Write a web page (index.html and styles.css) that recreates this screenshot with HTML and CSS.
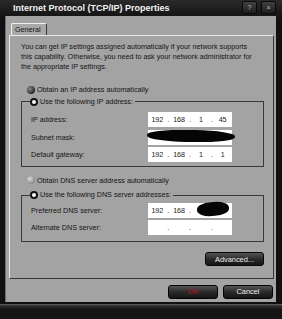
FILE: index.html
```html
<!DOCTYPE html>
<html lang="en">
<head>
    <meta charset="UTF-8">
    <title>Internet Protocol (TCP/IP) Properties</title>
    <link rel="stylesheet" href="styles.css">
</head>
<body>
    <div class="window">
        <div class="titlebar">
            <span class="title">Internet Protocol (TCP/IP) Properties</span>
            <div class="caption-buttons">
                <span class="cap-btn">?</span>
                <span class="cap-btn">&times;</span>
            </div>
        </div>
        <div class="client">
            <div class="tabs"><span class="tab">General</span></div>
            <div class="panel">
                <p class="intro">You can get IP settings assigned automatically if your network supports this capability. Otherwise, you need to ask your network administrator for the appropriate IP settings.</p>
                <div class="radio-line first"><span class="radio dark"></span>Obtain an IP address automatically</div>
                <fieldset class="group ip-group">
                    <legend><span class="radio on"></span>Use the following IP address:</legend>
                    <div class="field">
                        <span>IP address:</span>
                        <span class="ipbox"><b>192</b><i>.</i><b>168</b><i>.</i><b>1</b><i>.</i><b>45</b></span>
                    </div>
                    <div class="field">
                        <span>Subnet mask:</span>
                        <span class="ipbox"><b></b><i></i><b></b><i></i><b></b><i></i><b></b><span class="scribble wide"></span></span>
                    </div>
                    <div class="field">
                        <span>Default gateway:</span>
                        <span class="ipbox"><b>192</b><i>.</i><b>168</b><i>.</i><b>1</b><i>.</i><b>1</b></span>
                    </div>
                </fieldset>
                <div class="radio-line second"><span class="radio light"></span>Obtain DNS server address automatically</div>
                <fieldset class="group dns-group">
                    <legend><span class="radio on"></span>Use the following DNS server addresses:</legend>
                    <div class="field">
                        <span>Preferred DNS server:</span>
                        <span class="ipbox"><b>192</b><i>.</i><b>168</b><i>.</i><b></b><i></i><b></b><span class="scribble short"></span></span>
                    </div>
                    <div class="field">
                        <span>Alternate DNS server:</span>
                        <span class="ipbox"><b></b><i>.</i><b></b><i>.</i><b></b><i>.</i><b></b></span>
                    </div>
                </fieldset>
                <div class="adv-row"><button class="btn">Advanced...</button></div>
            </div>
            <div class="dialog-buttons">
                <button class="btn ok">OK</button>
                <button class="btn">Cancel</button>
            </div>
        </div>
        <div class="footer"></div>
    </div>
</body>
</html>
```

FILE: styles.css
```css
body {
    margin: 0;
    background-color: #161616;
    font-family: "Liberation Sans", Arial, sans-serif;
}
.window {
    width: 282px;
    height: 319px;
    background: linear-gradient(#2a2a2a, #101010 20px);
    display: flex;
    flex-direction: column;
}
.titlebar {
    height: 16px;
    display: flex;
    align-items: center;
    justify-content: space-between;
    padding: 0 6px 0 13px;
}
.title {
    color: #f2f2f2;
    font-weight: bold;
    font-size: 9px;
}
.caption-buttons {
    display: flex;
    gap: 4px;
}
.cap-btn {
    width: 13px;
    height: 11px;
    background: linear-gradient(#404040, #1e1e1e);
    border: 1px solid #0a0a0a;
    border-radius: 2px;
    color: #bdbdbd;
    font-size: 7px;
    line-height: 11px;
    text-align: center;
}
.client {
    margin: 0 6px 0 5px;
    height: 287px;
    background-color: #a3a3a3;
    border-left: 1px solid #6c6c6c;
    padding: 7px 0 0 3px;
    box-sizing: border-box;
    font-size: 7.2px;
    color: #141414;
}
.tabs {
    display: flex;
    padding-left: 2px;
}
.tab {
    width: 36px;
    height: 12px;
    border: 1px solid #f0f0f0;
    border-bottom: none;
    border-right-color: #3a3a3a;
    border-radius: 2px 2px 0 0;
    background-color: #a8a8a8;
    line-height: 12px;
    padding-left: 3px;
    box-sizing: border-box;
}
.panel {
    width: 265px;
    height: 244px;
    box-sizing: border-box;
    border: 1px solid #e8e8e8;
    border-right-color: #383838;
    border-bottom-color: #383838;
    padding: 6px 9px 0 11px;
}
.intro {
    margin: 0;
    width: 232px;
    line-height: 10px;
}
.radio-line {
    display: flex;
    align-items: center;
    height: 10px;
    margin-left: 6px;
}
.radio-line.first {
    margin-top: 13px;
}
.radio-line.second {
    margin-top: 8px;
}
.radio {
    width: 8px;
    height: 8px;
    border-radius: 50%;
    margin-right: 2px;
    box-sizing: border-box;
    flex: none;
}
.radio.dark {
    background: radial-gradient(circle at 35% 35%, #8a8a8a, #2a2a2a 70%);
}
.radio.light {
    background: radial-gradient(circle at 35% 35%, #dcdcdc, #8c8c8c 70%);
}
.radio.on {
    background-color: #ffffff;
    border: 2px solid #111111;
}
.group {
    margin: 2px 0 0 0;
    padding: 0 0 0 9px;
    border: 1px solid #3a3a3a;
    width: 243px;
    box-sizing: border-box;
}
.ip-group {
    padding-top: 4px;
    padding-bottom: 3px;
}
.ip-group .field {
    height: 17.5px;
}
.dns-group {
    margin-top: 5px;
    padding-top: 2px;
    padding-bottom: 5px;
}
.dns-group .field {
    height: 17px;
}
.group legend {
    display: flex;
    align-items: center;
    padding: 0 2px 0 0;
    margin-left: -1px;
    height: 10px;
    line-height: 10px;
}
.field {
    display: flex;
    align-items: center;
    justify-content: space-between;
    padding-right: 31px;
}
.ipbox {
    position: relative;
    width: 84px;
    height: 15px;
    background-color: #ffffff;
    display: grid;
    grid-template-columns: 1fr 3px 1fr 3px 1fr 3px 1fr;
    align-items: center;
    color: #222222;
}
.ipbox b {
    font-weight: normal;
    text-align: center;
}
.ipbox i {
    font-style: normal;
    text-align: center;
}
.scribble {
    position: absolute;
    background-color: #050505;
    border-radius: 45%;
}
.scribble.wide {
    left: -1px;
    right: -3px;
    top: 0;
    height: 12px;
    transform: rotate(1deg);
}
.scribble.short {
    left: 49px;
    width: 32px;
    top: -1px;
    height: 14px;
    transform: rotate(-4deg);
}
.adv-row {
    display: flex;
    justify-content: flex-end;
    margin-top: 10px;
}
.btn {
    height: 14px;
    border: 1px solid #050505;
    border-radius: 3px;
    background: linear-gradient(#555555, #2a2a2a 50%, #151515);
    color: #f0f0f0;
    font-family: "Liberation Sans", Arial, sans-serif;
    font-size: 7.4px;
    padding: 0;
    width: 59px;
}
.dialog-buttons {
    display: flex;
    justify-content: flex-end;
    gap: 5px;
    padding: 6px 3px 0 0;
}
.dialog-buttons .btn {
    width: 50px;
}
.btn.ok {
    color: #c01020;
}
.footer {
    margin-top: 2px;
    height: 14px;
    border-top: 1px solid #5a5a5a;
    background: linear-gradient(#3a3a3a, #151515 4px);
}
```
